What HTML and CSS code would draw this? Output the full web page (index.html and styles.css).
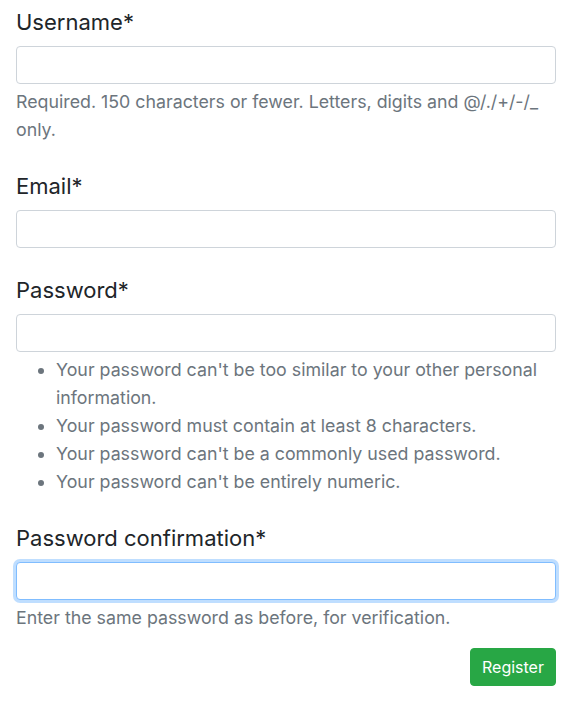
FILE: index.html
```html
<!DOCTYPE html>
<html lang="en">
<head>
<meta charset="utf-8">
<title>Register</title>
<link rel="stylesheet" href="styles.css">
</head>
<body>
<form class="form">
  <div class="group">
    <label class="label" for="u">Username*</label>
    <input class="input" id="u" type="text">
    <small class="help">Required. 150 characters or fewer. Letters, digits and @/./+/-/_ only.</small>
  </div>
  <div class="group">
    <label class="label" for="e">Email*</label>
    <input class="input" id="e" type="email">
  </div>
  <div class="group">
    <label class="label" for="p1">Password*</label>
    <input class="input" id="p1" type="password">
    <ul class="rules">
      <li>Your password can't be too similar to your other personal information.</li>
      <li>Your password must contain at least 8 characters.</li>
      <li>Your password can't be a commonly used password.</li>
      <li>Your password can't be entirely numeric.</li>
    </ul>
  </div>
  <div class="group last">
    <label class="label" for="p2">Password confirmation*</label>
    <input class="input focus" id="p2" type="password">
    <small class="help">Enter the same password as before, for verification.</small>
  </div>
  <div class="actions">
    <button class="btn" type="button">Register</button>
  </div>
</form>
</body>
</html>
```
FILE: styles.css
```css
html, body {
  margin: 0;
  padding: 0;
  background: #fff;
}
body {
  font-family: Inter, "Liberation Sans", sans-serif;
  color: #212529;
}
.form {
  padding: 7px 16px 0;
  display: flex;
  flex-direction: column;
}
.group {
  display: flex;
  flex-direction: column;
  margin-bottom: 27px;
}
.group.last {
  margin-bottom: 16px;
}
.label {
  font-size: 22px;
  line-height: 30px;
  margin-bottom: 9px;
  color: #212529;
}
.input {
  box-sizing: border-box;
  height: 38px;
  width: 100%;
  border: 1px solid #ced4da;
  border-radius: 4px;
  background: #fff;
  margin: 0;
  padding: 6px 12px;
  font-size: 16px;
  outline: none;
}
.input.focus {
  border-color: #80bdff;
  box-shadow: 0 0 0 3px rgba(0, 123, 255, 0.25);
}
.help {
  display: block;
  margin-top: 4px;
  font-size: 17.8px;
  line-height: 28px;
  color: #6c757d;
}
.rules {
  margin: 4px 0 0;
  padding-left: 40px;
  font-size: 17.8px;
  line-height: 28px;
  color: #6c757d;
}
.actions {
  display: flex;
  justify-content: flex-end;
}
.btn {
  box-sizing: border-box;
  height: 38px;
  width: 86px;
  border: 1px solid #28a745;
  border-radius: 4px;
  background: #28a745;
  color: #fff;
  font-family: Inter, "Liberation Sans", sans-serif;
  font-size: 16px;
  padding: 0;
}
```
